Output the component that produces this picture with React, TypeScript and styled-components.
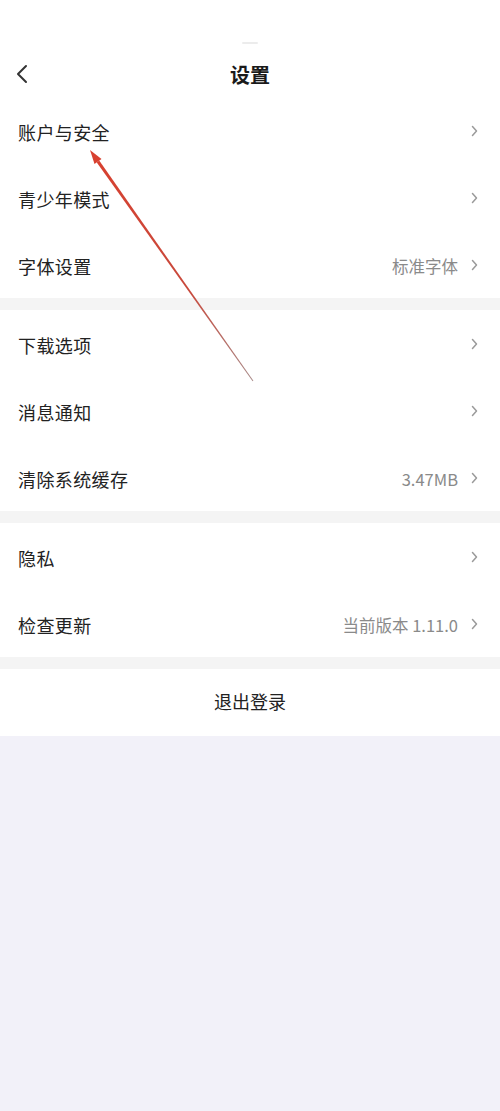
import React from "react";
import styled, { createGlobalStyle } from "styled-components";

const Global = createGlobalStyle`
  html, body { margin: 0; padding: 0; background: #f2f1f9; }
  body { font-family: "Noto Sans CJK SC", "Noto Sans", sans-serif; -webkit-font-smoothing: antialiased; }
  #root { min-height: 1111px; }
`;

const Page = styled.div`
  position: relative;
  width: 500px;
  min-height: 1111px;
  background: #f2f1f9;
  display: flex;
  flex-direction: column;
`;

const Top = styled.div`
  background: #fff;
  height: 50px;
  display: flex;
  justify-content: center;
  align-items: flex-end;
`;

const Grip = styled.div`
  width: 16px;
  height: 2px;
  border-radius: 1px;
  background: #ececec;
  margin-bottom: 6px;
`;

const NavBar = styled.div`
  background: #fff;
  height: 47px;
  display: flex;
  align-items: center;
  justify-content: center;
  position: relative;
`;

const Back = styled.div`
  position: absolute;
  left: 15px;
  top: 12px;
  width: 16px;
  height: 24px;
  display: flex;
  align-items: center;
`;

const Title = styled.div`
  font-size: 20px;
  font-weight: 700;
  color: #1a1a1a;
  margin-top: 2px;
`;

const Group = styled.div`
  background: #fff;
  display: flex;
  flex-direction: column;
`;

const Divider = styled.div`
  height: 12px;
  background: #f4f4f4;
`;

const Row = styled.div`
  height: 67px;
  display: flex;
  align-items: center;
  padding: 0 22px 0 18px;
`;

const Label = styled.div`
  flex: 1;
  font-size: 18px;
  color: #222;
  letter-spacing: 0.4px;
  margin-top: 2px;
`;

const Value = styled.div`
  font-size: 16.5px;
  color: #8a8a8a;
  margin-right: 13px;
  margin-top: 2px;
`;

const Logout = styled.div`
  height: 67px;
  background: #fff;
  display: flex;
  align-items: center;
  justify-content: center;
  font-size: 18px;
  color: #222;
  padding-bottom: 3px;
  box-sizing: border-box;
`;

const ArrowLayer = styled.svg`
  position: absolute;
  left: 0;
  top: 0;
  pointer-events: none;
`;

const Chevron = () => (
  <svg width="7" height="12" viewBox="0 0 7 12">
    <path d="M1.5 1.5 L5.5 6 L1.5 10.5" fill="none" stroke="#9a9a9a" strokeWidth="1.5" strokeLinecap="round" strokeLinejoin="round" />
  </svg>
);

type Item = { label: string; value?: string };

const SettingRow = ({ label, value }: Item) => (
  <Row>
    <Label>{label}</Label>
    {value && <Value>{value}</Value>}
    <Chevron />
  </Row>
);

const groups: Item[][] = [
  [{ label: "账户与安全" }, { label: "青少年模式" }, { label: "字体设置", value: "标准字体" }],
  [{ label: "下载选项" }, { label: "消息通知" }, { label: "清除系统缓存", value: "3.47MB" }],
  [{ label: "隐私" }, { label: "检查更新", value: "当前版本 1.11.0" }],
];

export default function App() {
  return (
    <>
      <Global />
      <Page>
        <Top>
          <Grip />
        </Top>
        <NavBar>
          <Back>
            <svg width="14" height="22" viewBox="0 0 14 22">
              <path d="M11 3 L3 11 L11 19" fill="none" stroke="#333" strokeWidth="2" strokeLinecap="round" strokeLinejoin="round" />
            </svg>
          </Back>
          <Title>设置</Title>
        </NavBar>
        {groups.map((g, i) => (
          <React.Fragment key={i}>
            {i > 0 && <Divider />}
            <Group>
              {g.map((it) => (
                <SettingRow key={it.label} {...it} />
              ))}
            </Group>
          </React.Fragment>
        ))}
        <Divider />
        <Logout>退出登录</Logout>
        <ArrowLayer width="500" height="1111" viewBox="0 0 500 1111">
          <defs>
            <linearGradient id="ag" x1="92" y1="152" x2="253" y2="381" gradientUnits="userSpaceOnUse">
              <stop offset="0" stopColor="#d8402f" />
              <stop offset="0.6" stopColor="#c8493c" />
              <stop offset="1" stopColor="#a88a88" />
            </linearGradient>
          </defs>
          <polygon points="99.2,160.6 253.4,380.8 252.6,381.2 96.8,162.4" fill="url(#ag)" />
          <polygon points="90,150 101.5,159 94.5,164" fill="#d8402f" />
        </ArrowLayer>
      </Page>
    </>
  );
}
